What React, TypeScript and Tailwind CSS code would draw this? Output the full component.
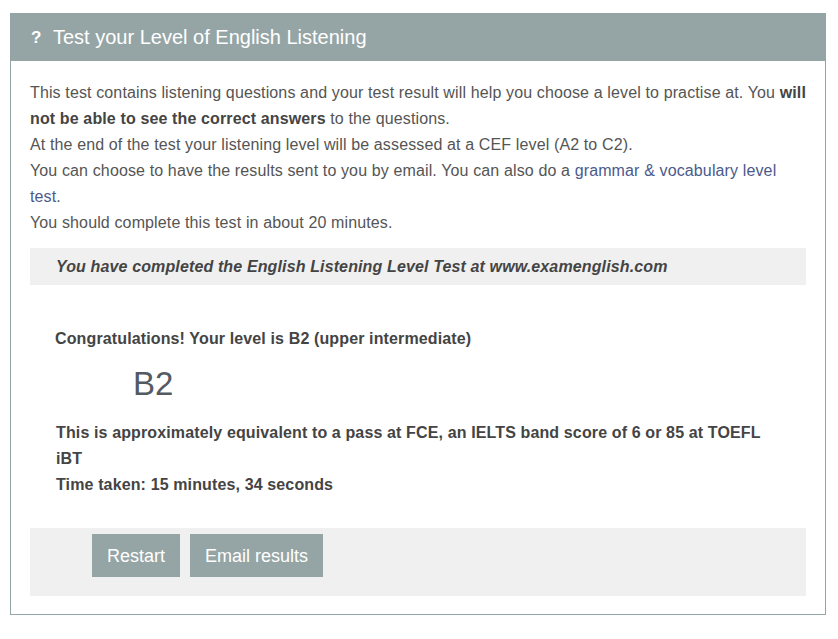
export default function App() {
  return (
    <div className="min-h-screen bg-white pt-[13px] pl-[10px]" style={{ fontFamily: '"Liberation Sans", Arial, sans-serif' }}>
      <div className="w-[816px] border border-[#95a5a6] bg-white">
        {/* header */}
        <div className="flex h-[47px] items-center bg-[#95a5a6] pl-[20px] text-white">
          <span className="w-[22px] text-[17px] font-bold">?</span>
          <h1 className="pb-[2px] text-[20px] leading-none">Test your Level of English Listening</h1>
        </div>

        <div className="px-[19px] pt-[19px] pb-[18px] text-[16px] leading-[26px] tracking-[0.13px] text-[#555]">
          <p>
            This test contains listening questions and your test result will help you choose a level to practise at. You{" "}
            <b className="text-[#444]">will not be able to see the correct answers</b> to the questions.
            <br />
            At the end of the test your listening level will be assessed at a CEF level (A2 to C2).
            <br />
            You can choose to have the results sent to you by email. You can also do a{" "}
            <a className="text-[#4b5a8c]">grammar &amp; vocabulary level test</a>.
            <br />
            You should complete this test in about 20 minutes.
          </p>

          <div className="mt-[12px] flex h-[37px] items-center bg-[#f0f0f0] pl-[26px]">
            <p className="font-bold italic text-[#444]">You have completed the English Listening Level Test at www.examenglish.com</p>
          </div>

          <div className="pt-[41px] pb-[30px] pl-[25px] font-bold text-[#444]">
            <p>Congratulations! Your level is B2 (upper intermediate)</p>
            <p className="mt-[12px] mb-[16px] pl-[78px] text-[33px] font-normal leading-[40px] tracking-normal text-[#545a62]">B2</p>
            <p className="w-[720px] pl-[1px]">This is approximately equivalent to a pass at FCE, an IELTS band score of 6 or 85 at TOEFL iBT</p>
            <p className="pl-[1px]">Time taken: 15 minutes, 34 seconds</p>
          </div>

          <div className="flex h-[68px] gap-[10px] bg-[#f0f0f0] pt-[6px] pl-[62px]">
            <button className="h-[43px] bg-[#95a5a6] px-[15px] text-[18px] tracking-normal text-white">Restart</button>
            <button className="h-[43px] bg-[#95a5a6] px-[15px] text-[18px] tracking-normal text-white">Email results</button>
          </div>
        </div>
      </div>
    </div>
  );
}
